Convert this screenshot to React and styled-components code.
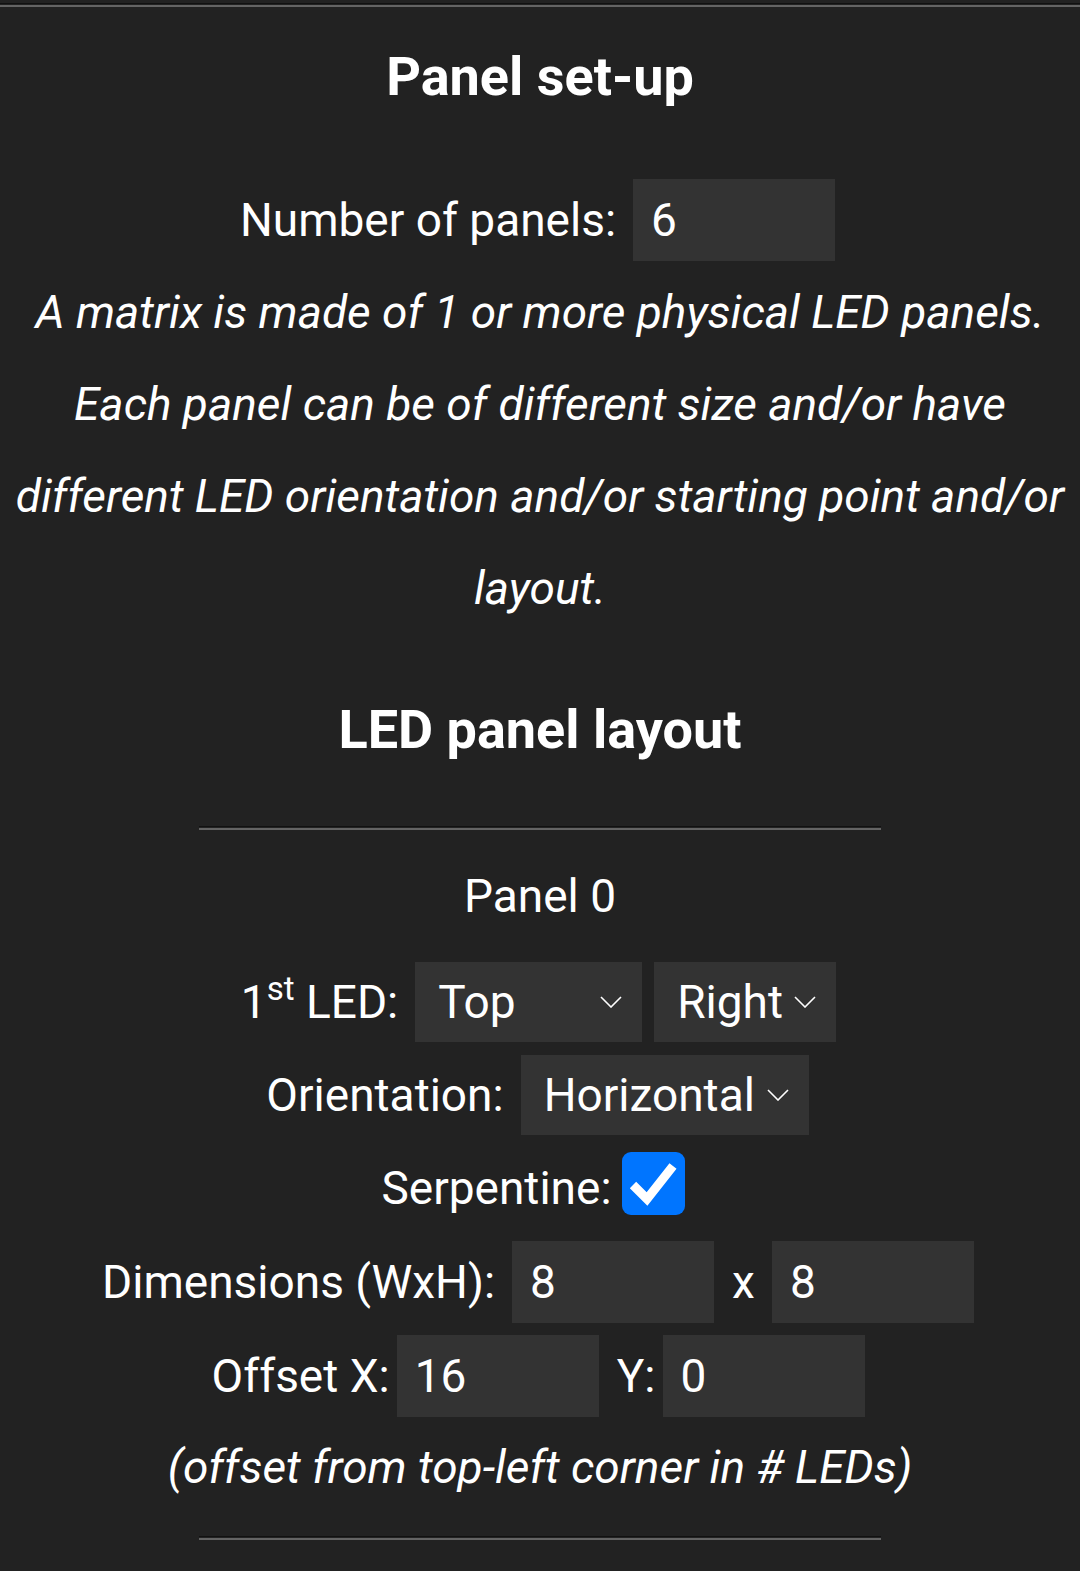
import React from "react";
import styled, { createGlobalStyle } from "styled-components";

const GlobalStyle = createGlobalStyle`
  html, body {
    margin: 0;
    padding: 0;
    background: #222;
  }
  body {
    font-family: Roboto, "Noto Sans", Arial, sans-serif;
    font-size: 46px;
    color: #fff;
  }
`;

const Page = styled.div`
  text-align: center;
  padding-top: 3px;
  padding-bottom: 40px;
`;

const Rule = styled.hr`
  box-sizing: border-box;
  width: ${(p) => (p.$full ? "100%" : "682px")};
  height: 4px;
  margin: ${(p) => p.$top || 0}px auto 0;
  border: 0;
  border-top: 1.5px solid #111;
  border-bottom: 2.5px solid #646464;
`;

const Heading = styled.h2`
  margin: ${(p) => p.$top}px 0 0;
  font-size: 54px;
  line-height: 64px;
  font-weight: 700;
`;

const Intro = styled.div`
  margin-top: 65px;
`;

const Row = styled.div`
  display: flex;
  justify-content: center;
  align-items: center;
  gap: ${(p) => p.$gap}px;
  margin-top: ${(p) => p.$top || 0}px;
  padding-right: ${(p) => p.$pull || 0}px;
  height: ${(p) => (p.$h ? `${p.$h}px` : "auto")};
`;

const Label = styled.span`
  white-space: nowrap;
  margin-right: ${(p) => p.$after || 0}px;
  margin-left: ${(p) => p.$before || 0}px;
`;

const Sup = styled.sup`
  font-size: 0.72em;
  vertical-align: 0;
  position: relative;
  top: -0.55em;
`;

const Blurb = styled.p`
  margin: 0;
  font-style: italic;
  line-height: 92px;
  white-space: nowrap;
`;

const PanelName = styled.div`
  margin-top: 40px;
  line-height: 52px;
`;

const Note = styled.div`
  margin-top: 24px;
  line-height: 52px;
  font-style: italic;
`;

const NumInput = styled.input`
  box-sizing: border-box;
  width: 202px;
  height: 82px;
  padding: 0 18px;
  border: 0;
  border-radius: 0;
  background: #333;
  color: #fff;
  font: inherit;
  outline: none;
  -moz-appearance: textfield;
  &::-webkit-inner-spin-button,
  &::-webkit-outer-spin-button {
    -webkit-appearance: none;
    margin: 0;
  }
`;

const SelectBox = styled.div`
  box-sizing: border-box;
  display: flex;
  align-items: center;
  justify-content: space-between;
  width: ${(p) => p.$w}px;
  height: 80px;
  padding: 0 20px 0 23px;
  background: #333;
  cursor: pointer;
`;

const CheckBox = styled.span`
  display: inline-flex;
  width: 63px;
  height: 63px;
  border-radius: 9px;
  background: #0075ff;
  margin-top: -8px;
`;

const Chevron = () => (
  <svg width="22" height="12" viewBox="0 0 22 12">
    <polyline points="1,1 11,11 21,1" fill="none" stroke="#fff" strokeWidth="1.6" />
  </svg>
);

const Select = ({ value, width }) => (
  <SelectBox $w={width} role="combobox">
    <span>{value}</span>
    <Chevron />
  </SelectBox>
);

const Check = () => (
  <CheckBox role="checkbox" aria-checked="true">
    <svg width="63" height="63" viewBox="0 0 63 63">
      <polyline points="11,33 25,47 51,14" fill="none" stroke="#fff" strokeWidth="9" />
    </svg>
  </CheckBox>
);

export default function App() {
  return (
    <>
      <GlobalStyle />
      <Page>
        <Rule $full />
        <Heading $top={38}>Panel set-up</Heading>
        <Intro>
          <Row $gap={17} $h={92} $pull={5}>
            <Label>Number of panels:</Label>
            <NumInput type="number" defaultValue={6} />
          </Row>
          <Blurb>
            A matrix is made of 1 or more physical LED panels.
            <br />
            Each panel can be of different size and/or have
            <br />
            different LED orientation and/or starting point and/or
            <br />
            layout.
          </Blurb>
        </Intro>
        <Heading as="h3" $top={64}>LED panel layout</Heading>
        <Rule $top={64} />
        <PanelName>Panel 0</PanelName>
        <Row $gap={12} $top={40} $pull={3}>
          <Label $after={5}>
            1<Sup>st</Sup> LED:
          </Label>
          <Select value="Top" width={227} />
          <Select value="Right" width={182} />
        </Row>
        <Row $gap={17} $top={13} $pull={5}>
          <Label>Orientation:</Label>
          <Select value="Horizontal" width={288} />
        </Row>
        <Row $gap={10} $top={25} $pull={14}>
          <Label>Serpentine:</Label>
          <Check />
        </Row>
        <Row $gap={17} $top={26} $pull={4}>
          <Label>Dimensions (WxH):</Label>
          <NumInput type="number" defaultValue={8} />
          <Label $before={1}>x</Label>
          <NumInput type="number" defaultValue={8} />
        </Row>
        <Row $gap={7} $top={12} $pull={4}>
          <Label>Offset X:</Label>
          <NumInput type="number" defaultValue={16} />
          <Label $before={11}>Y:</Label>
          <NumInput type="number" defaultValue={0} />
        </Row>
        <Note>(offset from top-left corner in # LEDs)</Note>
        <Rule $top={43} />
      </Page>
    </>
  );
}
